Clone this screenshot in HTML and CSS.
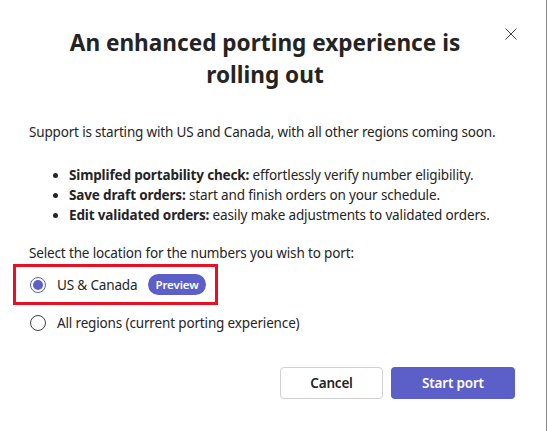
FILE: index.html
```html
<!DOCTYPE html>
<html>
<head>
<meta charset="utf-8">
<link rel="stylesheet" href="styles.css">
</head>
<body>
<div class="dialog">
  <button class="close" aria-label="Close">
    <svg width="12" height="12" viewBox="0 0 12 12"><path d="M0.5 0.5L11.5 11.5M11.5 0.5L0.5 11.5" stroke="#424242" stroke-width="1" fill="none"/></svg>
  </button>
  <h1 class="title">An enhanced porting experience is rolling out</h1>
  <p class="intro">Support is starting with US and Canada, with all other regions coming soon.</p>
  <ul class="features">
    <li><b>Simplifed portability check:</b> effortlessly verify number eligibility.</li>
    <li><b>Save draft orders:</b> start and finish orders on your schedule.</li>
    <li><b>Edit validated orders:</b> easily make adjustments to validated orders.</li>
  </ul>
  <p class="prompt">Select the location for the numbers you wish to port:</p>
  <div class="options">
    <div class="highlight">
      <label class="option"><span class="radio checked"></span><span>US &amp; Canada</span><span class="badge">Preview</span></label>
    </div>
    <label class="option second"><span class="radio"></span><span>All regions (current porting experience)</span></label>
  </div>
  <div class="actions">
    <button class="btn secondary">Cancel</button>
    <button class="btn primary">Start port</button>
  </div>
</div>
</body>
</html>
```
FILE: styles.css
```css
html, body {
  margin: 0;
  padding: 0;
  background: #fff;
}
body {
  font-family: "Noto Sans", "Open Sans", sans-serif;
  color: #242424;
}
.dialog {
  position: relative;
  width: 547px;
  height: 431px;
  border-right: 1px solid #8a8a8a;
  box-sizing: border-box;
  padding: 27px 31px 0 29px;
}
.close {
  position: absolute;
  top: 28px;
  left: 505px;
  width: 12px;
  height: 12px;
  padding: 0;
  border: 0;
  background: none;
  display: flex;
}
.title {
  margin: 0 0 0 26px;
  width: 420px;
  font-size: 22.6px;
  line-height: 32px;
  font-weight: 700;
  text-align: center;
}
.intro {
  margin: 31px 0 0 0;
  font-size: 13.5px;
  letter-spacing: -0.17px;
  line-height: 20px;
}
.features {
  margin: 23px 0 0 0;
  padding-left: 40px;
  font-size: 13.5px;
  letter-spacing: -0.14px;
  line-height: 20px;
}
.features b { font-weight: 700; }
.prompt {
  margin: 18px 0 0 0;
  font-size: 13.5px;
  letter-spacing: -0.15px;
  line-height: 20px;
}
.options {
  margin-left: -16px;
  margin-top: 1px;
}
.highlight {
  width: 205px;
  height: 41px;
  box-sizing: border-box;
  border: 3px solid #e81123;
  display: flex;
  align-items: center;
  padding-left: 14px;
}
.option {
  display: flex;
  align-items: center;
  gap: 11px;
  font-size: 13.5px;
  letter-spacing: -0.15px;
  line-height: 20px;
}
.option.second {
  padding-left: 17px;
  margin-top: 8px;
}
.radio {
  width: 16px;
  height: 16px;
  box-sizing: border-box;
  border: 1px solid #424242;
  border-radius: 50%;
  display: flex;
  align-items: center;
  justify-content: center;
}
.radio.checked {
  border-color: #5b5fc7;
}
.radio.checked::after {
  content: "";
  width: 10px;
  height: 10px;
  border-radius: 50%;
  background: #5b5fc7;
}
.badge {
  margin-left: 0;
  background: #5b5fc7;
  color: #fff;
  font-size: 11.5px;
  letter-spacing: -0.1px;
  font-weight: 600;
  line-height: 21px;
  height: 21px;
  padding: 0 7px;
  border-radius: 11px;
}
.actions {
  display: flex;
  justify-content: flex-end;
  gap: 8px;
  margin-top: 34px;
}
.btn {
  height: 32px;
  border-radius: 4px;
  font-family: inherit;
  font-size: 13.5px;
  letter-spacing: -0.2px;
  font-weight: 600;
  box-sizing: border-box;
}
.secondary {
  width: 103px;
  background: #fff;
  border: 1px solid #d1d1d1;
  color: #242424;
}
.primary {
  width: 124px;
  background: #5b5fc7;
  border: 0;
  color: #fff;
}
```
